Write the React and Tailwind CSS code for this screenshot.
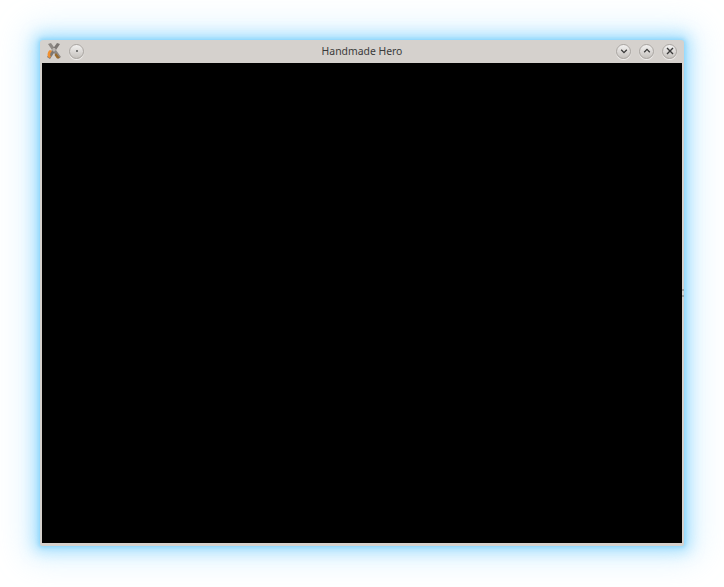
import React from "react";

const Btn = ({ children }) => (
  <div className="w-[15px] h-[15px] rounded-full bg-gradient-to-b from-[#f2f1f0] to-[#c6c2be] border border-[#aaa6a2] shadow-[0_1px_1px_rgba(255,255,255,0.7)] flex items-center justify-center">
    {children}
  </div>
);

export default function App() {
  return (
    <div className="w-[724px] h-[587px] bg-white overflow-hidden pt-[40px] pl-[40px]">
      <div className="relative w-[644px] h-[506px] flex flex-col rounded-t-[3px] rounded-b-[2px] bg-[#d5d1cd] px-[2px] pb-[3px] shadow-[0_0_4px_1px_rgba(125,208,250,0.85),0_0_14px_6px_rgba(130,210,252,0.6),0_0_32px_12px_rgba(165,225,255,0.4)]">
        <div className="h-[23px] shrink-0 flex items-center justify-between font-['Noto_Sans',sans-serif] text-[10.4px] text-[#3a3a3a] relative">
          <div className="flex items-center gap-[6px] pl-[3px] pb-[1px]">
            <svg width="18" height="18" viewBox="0 0 18 18">
              <path d="M3 2 L6 1 L16 15 L13 17 Z" fill="#8d8884" />
              <path d="M15 2 L12 1 L2 15 L5 17 Z" fill="#7c7774" />
              <path d="M5 8 C2 10 2 14 4 16 L6 15 C4.5 13 5 11 7 9 Z" fill="#f09030" />
              <path d="M11 11 L15 16 L12 16.5 L9.5 13 Z" fill="#9a6a2c" />
              <path d="M8 6 L10 6 L11 8 L9 10 L7 8 Z" fill="#b8b4b0" />
            </svg>
            <Btn>
              <div className="w-[2px] h-[2px] rounded-full bg-[#555]" />
            </Btn>
          </div>
          <span className="absolute left-0 w-full text-center leading-none pb-[1px]">Handmade Hero</span>
          <div className="flex items-center gap-[8px] pr-[5px] pb-[1px]">
            <Btn>
              <svg width="10" height="10" viewBox="0 0 10 10"><path d="M2.2 3.8 L5 6.6 L7.8 3.8" fill="none" stroke="#3a3a3a" strokeWidth="1.3" /></svg>
            </Btn>
            <Btn>
              <svg width="10" height="10" viewBox="0 0 10 10"><path d="M2.2 6.2 L5 3.4 L7.8 6.2" fill="none" stroke="#3a3a3a" strokeWidth="1.3" /></svg>
            </Btn>
            <Btn>
              <svg width="10" height="10" viewBox="0 0 10 10"><path d="M2 2 L8 8 M8 2 L2 8" fill="none" stroke="#3a3a3a" strokeWidth="1.4" /></svg>
            </Btn>
          </div>
        </div>
        <div className="w-[640px] h-[480px] bg-black" />
        <div className="absolute right-0 top-[249px] w-[2px] h-[8px] flex flex-col justify-between">
          <div className="h-[2px] bg-[#a5a29f]" />
          <div className="h-[2px] bg-[#a5a29f]" />
        </div>
      </div>
    </div>
  );
}
